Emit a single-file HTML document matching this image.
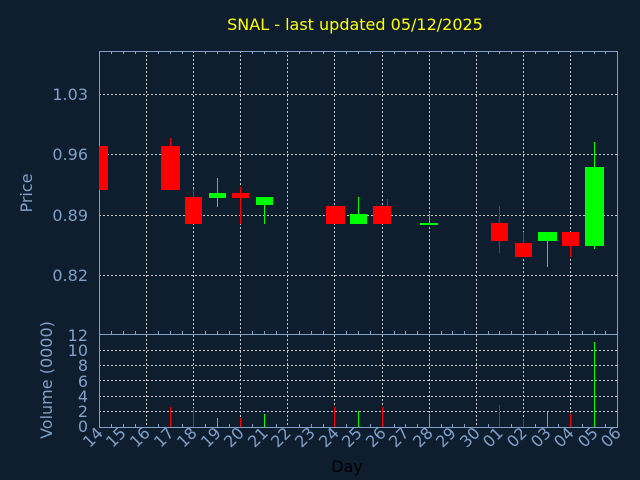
<!DOCTYPE html>
<html><head><style>body{margin:0;background:#0f1e2f}svg{display:block}</style></head><body>
<svg width="640" height="480" xmlns="http://www.w3.org/2000/svg" font-family="DejaVu Sans, Liberation Sans, sans-serif">
<rect width="640" height="480" fill="#0f1e2f"/>
<text x="355" y="30" fill="#ffff00" font-size="16" text-anchor="middle">SNAL - last updated 05/12/2025</text>
<g stroke="#c8c8c8" stroke-dasharray="2,2" stroke-width="1">
<path d="M99 94.5H617M99 154.5H617M99 215.5H617M99 275.5H617"/>
<path d="M99 411.5H617M99 396.5H617M99 380.5H617M99 365.5H617M99 350.5H617"/>
<path d="M146.5 51V427M193.5 51V427M240.5 51V427M287.5 51V427M334.5 51V427M382.5 51V427M429.5 51V427M476.5 51V427M523.5 51V427M570.5 51V427"/>
</g>
<g stroke="#7fa0c8" fill="none">
<rect x="99.5" y="51.5" width="518" height="376"/>
<path d="M99 334.5H617"/>
<path d="M111.5 51v3M123.5 51v3M135.5 51v3M158.5 51v3M170.5 51v3M182.5 51v3M205.5 51v3M217.5 51v3M229.5 51v3M252.5 51v3M264.5 51v3M276.5 51v3M299.5 51v3M311.5 51v3M323.5 51v3M346.5 51v3M358.5 51v3M370.5 51v3M394.5 51v3M405.5 51v3M417.5 51v3M441.5 51v3M452.5 51v3M464.5 51v3M488.5 51v3M499.5 51v3M511.5 51v3M535.5 51v3M547.5 51v3M558.5 51v3M582.5 51v3M594.5 51v3M605.5 51v3"/>
<path d="M111.5 334v-3M123.5 334v-3M135.5 334v-3M158.5 334v-3M170.5 334v-3M182.5 334v-3M205.5 334v-3M217.5 334v-3M229.5 334v-3M252.5 334v-3M264.5 334v-3M276.5 334v-3M299.5 334v-3M311.5 334v-3M323.5 334v-3M346.5 334v-3M358.5 334v-3M370.5 334v-3M394.5 334v-3M405.5 334v-3M417.5 334v-3M441.5 334v-3M452.5 334v-3M464.5 334v-3M488.5 334v-3M499.5 334v-3M511.5 334v-3M535.5 334v-3M547.5 334v-3M558.5 334v-3M582.5 334v-3M594.5 334v-3M605.5 334v-3"/>
<path d="M111.5 427v-3M123.5 427v-3M135.5 427v-3M158.5 427v-3M170.5 427v-3M182.5 427v-3M205.5 427v-3M217.5 427v-3M229.5 427v-3M252.5 427v-3M264.5 427v-3M276.5 427v-3M299.5 427v-3M311.5 427v-3M323.5 427v-3M346.5 427v-3M358.5 427v-3M370.5 427v-3M394.5 427v-3M405.5 427v-3M417.5 427v-3M441.5 427v-3M452.5 427v-3M464.5 427v-3M488.5 427v-3M499.5 427v-3M511.5 427v-3M535.5 427v-3M547.5 427v-3M558.5 427v-3M582.5 427v-3M594.5 427v-3M605.5 427v-3"/>
</g>
<g fill="#7fa0c8" font-size="16" text-anchor="end">
<text x="88" y="100">1.03</text><text x="88" y="160">0.96</text><text x="88" y="221">0.89</text><text x="88" y="281">0.82</text>
<text x="88" y="341">12</text><text x="88" y="356">10</text><text x="88" y="371">8</text><text x="88" y="387">6</text><text x="88" y="402">4</text><text x="88" y="417">2</text><text x="88" y="432">0</text>
<text transform="translate(32 193) rotate(-90)" text-anchor="middle">Price</text>
<text transform="translate(52 380) rotate(-90)" text-anchor="middle">Volume (0000)</text>
</g>
<g fill="#7fa0c8" font-size="16" text-anchor="end">
<text transform="translate(104 434) rotate(-45)">14</text>
<text transform="translate(127 434) rotate(-45)">15</text>
<text transform="translate(151 434) rotate(-45)">16</text>
<text transform="translate(175 434) rotate(-45)">17</text>
<text transform="translate(198 434) rotate(-45)">18</text>
<text transform="translate(222 434) rotate(-45)">19</text>
<text transform="translate(245 434) rotate(-45)">20</text>
<text transform="translate(269 434) rotate(-45)">21</text>
<text transform="translate(292 434) rotate(-45)">22</text>
<text transform="translate(316 434) rotate(-45)">23</text>
<text transform="translate(340 434) rotate(-45)">24</text>
<text transform="translate(363 434) rotate(-45)">25</text>
<text transform="translate(387 434) rotate(-45)">26</text>
<text transform="translate(410 434) rotate(-45)">27</text>
<text transform="translate(434 434) rotate(-45)">28</text>
<text transform="translate(457 434) rotate(-45)">29</text>
<text transform="translate(481 434) rotate(-45)">30</text>
<text transform="translate(504 434) rotate(-45)">01</text>
<text transform="translate(528 434) rotate(-45)">02</text>
<text transform="translate(552 434) rotate(-45)">03</text>
<text transform="translate(575 434) rotate(-45)">04</text>
<text transform="translate(599 434) rotate(-45)">05</text>
<text transform="translate(622 434) rotate(-45)">06</text>
</g>
<text x="347" y="472" fill="#000" font-size="16" text-anchor="middle">Day</text>
<g stroke-width="1">
<path stroke="#ff0000" d="M170.5 138V146M193.5 189V197M240.5 187V224M387.5 199V224M499.5 206V253M523.5 232V243M570.5 246V257"/>
<path stroke="#00ff00" d="M217.5 178V207M264.5 205V224M358.5 197V214M429.5 214V224M547.5 241V267M594.5 142V249"/>
</g>
<g fill="#ff0000">
<rect x="99" y="146" width="9" height="44"/><rect x="161" y="146" width="19" height="44"/><rect x="185" y="197" width="17" height="27"/><rect x="232" y="193" width="17" height="5"/><rect x="326" y="206" width="19" height="18"/><rect x="373" y="206" width="18" height="18"/><rect x="491" y="223" width="17" height="18"/><rect x="515" y="243" width="17" height="14"/><rect x="562" y="232" width="17" height="14"/>
</g>
<g fill="#00ff00">
<rect x="209" y="193" width="17" height="5"/><rect x="256" y="197" width="17" height="8"/><rect x="350" y="214" width="17" height="10"/><rect x="420" y="223" width="18" height="2"/><rect x="538" y="232" width="19" height="9"/><rect x="585" y="167" width="19" height="79"/>
</g>
<g stroke-width="1">
<path stroke="#ff0000" d="M170.5 427V407M193.5 427V408M240.5 427V418M334.5 427V407M382.5 427V407M499.5 427V405M523.5 427V419M570.5 427V414"/>
<path stroke="#00ff00" d="M217.5 427V418M264.5 427V414M358.5 427V411M429.5 427V414M547.5 427V412M594.5 427V342"/>
</g>
</svg>
</body></html>
